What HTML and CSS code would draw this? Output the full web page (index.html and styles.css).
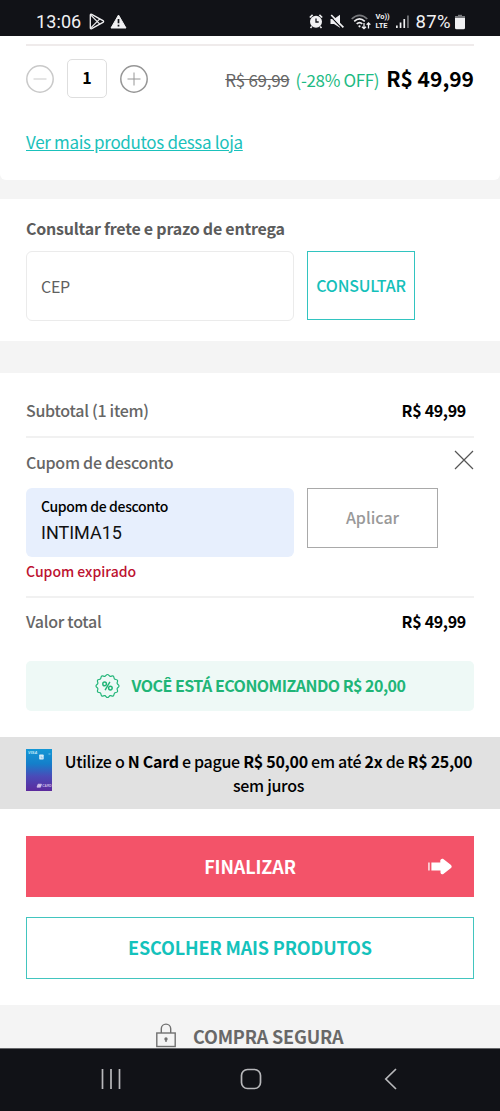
FILE: index.html
```html
<!DOCTYPE html>
<html lang="pt-BR">
<head>
<meta charset="utf-8">
<meta name="viewport" content="width=device-width, initial-scale=1">
<title>Carrinho</title>
<link rel="stylesheet" href="styles.css">
</head>
<body>
<div class="screen">
  <header class="status">
    <span class="clock">13:06</span>
    <svg class="st-play" width="16" height="17" viewBox="0 0 16 17" fill="none" stroke="#f1f1f3" stroke-width="1.300" stroke-linejoin="round"><path d="M1.300 2.200Q1.300.8 2.700 1.400L14 7.600Q15.300 8.500 14 9.400L2.700 15.600Q1.300 16.200 1.300 14.800Z"/><path d="M1.600 1.800 10.800 11.100M1.600 15.200 10.800 5.900" stroke-width="1.200"/></svg>
    <svg class="st-warn" width="17" height="15" viewBox="0 0 17 15"><path d="M8.500 1 16 14H1Z" fill="#f1f1f3" stroke="#f1f1f3" stroke-linejoin="round"/><path d="M8.500 5v4.300M8.500 10.700v1.800" stroke="#111217" stroke-width="1.700"/></svg>
    <span class="grow"></span>
    <svg class="st-alarm" width="14" height="15" viewBox="0 0 14 15"><circle cx="7" cy="7.800" r="6" fill="#f1f1f3"/><path d="M.8 3.500 3.600.9M13.200 3.500 10.400.9M2.800 12.500 1.500 14M11.200 12.500 12.500 14" stroke="#f1f1f3" stroke-width="1.600"/><path d="M7 4.600V8h2.700" fill="none" stroke="#111217" stroke-width="1.300"/></svg>
    <svg class="st-mute" width="14" height="15" viewBox="0 0 14 15"><path d="M.5 5H4L10 .8v12.900L4 9.900H.5Z" fill="#f1f1f3"/><path d="M.5 2.400 12.200 14.500" stroke="#111217" stroke-width="1.200"/><path d="M1.200 1 13.400 13.400" stroke="#f1f1f3" stroke-width="1.700"/></svg>
    <svg class="st-wifi" width="20" height="16" viewBox="0 0 20 16" fill="none" stroke="#f1f1f3" stroke-width="1.700"><path d="M.7 5Q8.500-2.200 16.300 5" stroke="#77787c"/><path d="M3.200 7.300Q8.500 2.600 13.800 7.300M5.700 9.800Q8.500 7.300 11.300 9.800"/><circle cx="8.500" cy="12.300" r="1.100" fill="#f1f1f3" stroke="none"/><path d="M13 9v5.500M11 12.700l2 2 2-2M17.500 14.500V9M15.700 10.800l1.800-1.900 1.800 1.900" stroke-width="1.300"/></svg>
    <span class="volte"><b>Vo))</b><b>LTE</b></span>
    <svg class="st-signal" width="13" height="14" viewBox="0 0 13 14" fill="#f1f1f3"><path d="M0 10.500h1.700V13H0zM3.700 7.500h1.700V13H3.700zM7.400 4h1.700v9H7.400z"/><path d="M11.100.5h1.700V13h-1.700z" fill="#77787c"/></svg>
    <span class="battery-text">87%</span>
    <svg class="st-battery" width="10" height="16" viewBox="0 0 10 16"><rect x="3" y=".8" width="4" height="3" fill="#77787c"/><rect x="0" y="2" width="10" height="13.300" rx="1.500" fill="#f1f1f3"/><path d="M0 4V3.500Q0 2 1.500 2h7Q10 2 10 3.500V4Z" fill="#77787c"/></svg>
  </header>

  <section class="item">
    <div class="rule"></div>
    <div class="item-row">
      <svg width="28" height="28" viewBox="0 0 28 28" fill="none" stroke="#c9c9c9"><circle cx="14" cy="14" r="13.200" stroke-width="1.500"/><path d="M7.500 14h13"/></svg>
      <span class="qty">1</span>
      <svg width="28" height="28" viewBox="0 0 28 28" fill="none" stroke="#969696"><circle cx="14" cy="14" r="13.200" stroke-width="1.500"/><path d="M7.500 14h13M14 7.500v13"/></svg>
      <span class="grow"></span>
      <s class="old-price">R$ 69,99</s>
      <span class="off">(-28% OFF)</span>
      <strong class="price">R$ 49,99</strong>
    </div>
    <a class="store-link">Ver mais produtos dessa loja</a>
  </section>

  <section class="shipping">
    <h2 class="ship-title">Consultar frete e prazo de entrega</h2>
    <div class="field-row">
      <div class="field cep">CEP</div>
      <button class="btn-consult">CONSULTAR</button>
    </div>
  </section>

  <main class="summary">
    <div class="line first"><span class="line-label">Subtotal (1 item)</span><b class="amount">R$ 49,99</b></div>
    <div class="rule light"></div>
    <div class="line coupon-head"><span class="line-label">Cupom de desconto</span>
      <svg width="20" height="20" viewBox="0 0 20 20" stroke="#555" stroke-width="1.200"><path d="M1 1 19 19M19 1 1 19"/></svg>
    </div>
    <div class="field-row">
      <div class="field coupon"><span class="coupon-label">Cupom de desconto</span><span class="coupon-code">INTIMA15</span></div>
      <button class="btn-apply">Aplicar</button>
    </div>
    <p class="error">Cupom expirado</p>
    <div class="rule light"></div>
    <div class="line total"><span class="line-label">Valor total</span><b class="amount">R$ 49,99</b></div>
    <div class="saving">
      <svg width="25" height="26" viewBox="-13 -13 26 26" fill="none" stroke="#20b577" stroke-width="1.200" stroke-linejoin="round"><path d="M0-12C1.200-12 1.700-10.300 2.700-10S5-11 6-10.400 6.500-8 7.300-7.300 9.800-7 10.400-6 9.700-3.700 10-2.700 12-1.200 12 0 10.300 1.700 10 2.700 11 5 10.400 6 8 6.500 7.300 7.300 7 9.800 6 10.400 3.700 9.700 2.700 10 1.200 12 0 12-1.700 10.300-2.700 10-5 11-6 10.400-6.500 8-7.300 7.300-9.800 7-10.400 6-9.700 3.700-10 2.700-12 1.200-12 0-10.300-1.700-10-2.700-11-5-10.400-6-8-6.500-7.300-7.300-7-9.800-6-10.400-3.700-9.700-2.700-10-1.200-12 0-12Z"/><g stroke-width="1.500"><circle cx="-3" cy="-2.200" r="1.900"/><circle cx="3" cy="2.200" r="1.900"/><path d="M2.500-4.200-2.500 4.200"/></g></svg>
      <span class="saving-text">VOCÊ ESTÁ ECONOMIZANDO R$ 20,00</span>
    </div>
    <div class="ncard">
      <svg width="26" height="42" viewBox="0 0 26 42"><defs><linearGradient id="card" x1="0" y1="0" x2="0" y2="1"><stop offset="0" stop-color="#1497d5"/><stop offset=".35" stop-color="#147fca"/><stop offset=".65" stop-color="#4a4bb8"/><stop offset="1" stop-color="#5c2a9d"/></linearGradient></defs><rect width="26" height="42" fill="url(#card)"/><text x="2" y="5" class="visa">VISA</text><rect x="13.200" y="5.500" width="4.500" height="5" rx=".7" fill="#d6ecf8"/><path d="M14.500 8h1.500v1.500" stroke="#5fa8da" stroke-width=".6" fill="none"/><path d="M22.500 5h2" stroke="#7cc8ec"/><path d="M12 35.200h3.500l-1 3h-3.500zM13 36.300h1.500" fill="#c9b5e4" stroke="#e2d6f1" stroke-width=".6"/><text x="16.300" y="38.200" class="card-word">CARD</text></svg>
      <p class="ncard-text">Utilize o <b>N Card</b> e pague <b>R$ 50,00</b> em até <b>2x</b> de <b>R$ 25,00</b><br>sem juros</p>
    </div>
    <div class="actions">
      <button class="btn-finish"><span>FINALIZAR</span>
        <svg class="hand" width="24" height="17" viewBox="0 0 24 17" fill="#fff"><path d="M.3 4.500h1.300v8H.3zM3.400 4.500h8.900V2.200Q13 .2 15 .8L22.700 6.700Q24.700 8.500 22.700 10.300L15 16.200Q13 16.800 12.500 14.800V12.500H3.400Z"/></svg>
      </button>
      <button class="btn-more">ESCOLHER MAIS PRODUTOS</button>
    </div>
  </main>

  <footer class="secure">
    <svg width="20" height="25" viewBox="0 0 20 25" fill="none" stroke="#707070" stroke-width="1.400"><rect x=".8" y="10" width="18.400" height="13.500"/><path d="M5.300 10V5.800a4.700 4.700 0 0 1 9.400 0V10"/><circle cx="10" cy="16" r="1" fill="#707070"/><path d="M10 16v3"/></svg>
    <span class="secure-text">COMPRA SEGURA</span>
  </footer>

  <nav class="nav">
    <svg width="22" height="22" viewBox="0 0 22 22" stroke="#b8b8bb" stroke-width="1.700"><path d="M2.500 1v20M11 1v20M19.500 1v20"/></svg>
    <svg width="22" height="22" viewBox="0 0 22 22" fill="none" stroke="#b8b8bb" stroke-width="1.700"><rect x="1.500" y="1.500" width="19" height="19" rx="6"/></svg>
    <svg width="22" height="22" viewBox="0 0 22 22" fill="none" stroke="#b8b8bb" stroke-width="1.700"><path d="M17 1 6.800 11 17 21"/></svg>
  </nav>
</div>
</body>
</html>
```
FILE: styles.css
```css
* { box-sizing: border-box; }
body { margin: 0; background: #f4f4f4; font-family: "Noto Sans CJK SC", "Noto Sans", sans-serif; color: #000; }
svg { display: block; flex: none; overflow: visible; }
button { font-family: inherit; margin: 0; padding: 0 0 2px; background: #fff; border-radius: 0; flex: none; }
h2, p { margin: 0; }
.screen { width: 500px; height: 1111px; display: flex; flex-direction: column; overflow: hidden; }
.screen span, .screen b, .screen s, .screen strong, .screen a { white-space: nowrap; }
.grow { flex: 1; }

.status { height: 36px; flex: none; padding: 7px 35px 0 36px; background: #111217; color: #f1f1f3; display: flex; align-items: center; font-family: Roboto, sans-serif; }
.clock { font-size: 18px; line-height: 28px; letter-spacing: 0.1px; }
.st-play { margin-left: 8px; }
.st-warn { margin-left: 5px; }
.st-mute { margin-left: 7px; }
.st-wifi { margin-left: 7px; }
.volte { margin-left: 4px; width: 15px; display: flex; flex-direction: column; font-size: 7.5px; line-height: 9px; margin-top: -2px; }
.volte b { height: 9px; }
.st-signal { margin-left: 6px; }
.battery-text { margin-left: 6px; font-size: 18.5px; line-height: 28px; letter-spacing: 0.4px; }
.st-battery { margin-left: 4px; }

.rule { height: 2px; background: #efebeb; }
.rule.light { background: #f1f1f1; }

.item { height: 144px; flex: none; background: #fff; border-radius: 0 0 6px 6px; padding: 8px 26px 0; }
.item-row { height: 66px; display: flex; align-items: center; }
.item-row > svg { margin-top: -1px; }
.qty { width: 40px; height: 39px; margin: -1px 13px 0; border: 1px solid #dedede; border-radius: 5px; font-size: 16px; line-height: 35px; font-weight: 700; text-align: center; }
.old-price { font-size: 17px; letter-spacing: -0.28px; color: #666; }
.off { margin-left: 6px; font-size: 17px; letter-spacing: -0.35px; color: #1dba83; }
.price { margin-left: 7px; font-size: 21px; line-height: 28px; margin-top: -3px; }
.store-link { display: block; margin-top: 16px; font-size: 17px; line-height: 28px; letter-spacing: -0.33px; color: #1ac1bb; text-decoration: underline; }

.shipping { height: 142px; flex: none; margin-top: 19px; background: #fff; padding: 17px 26px 0; }
.ship-title { font-size: 16px; line-height: 24px; letter-spacing: -0.23px; color: #5c5c5c; margin-bottom: 11px; }
.field-row { display: flex; align-items: flex-start; gap: 13px; }
.field { width: 268px; height: 70px; border-radius: 6px; padding-left: 15px; }
.cep { border: 1px solid #ebebeb; padding-left: 14px; font-size: 16px; line-height: 68px; letter-spacing: -0.3px; color: #606060; }
.btn-consult { width: 108px; height: 69px; border: 1px solid #32c4c0; color: #14c0ba; font-size: 16px; letter-spacing: -0.2px; font-weight: 500; }

.summary { height: 632px; flex: none; margin-top: 32px; background: #fff; }
.summary > .rule, .summary > .field-row { margin-left: 26px; margin-right: 26px; }
.line { display: flex; justify-content: space-between; align-items: center; padding: 0 34px 0 26px; font-size: 16px; line-height: 24px; }
.line-label { color: #666; font-weight: 500; letter-spacing: -0.27px; }
.first { padding-top: 25px; padding-bottom: 14px; }
.amount { font-size: 16px; letter-spacing: -0.32px; }
.coupon-head { height: 50px; padding-right: 26px; padding-bottom: 2px; }
.coupon-head svg { margin-top: -5px; }
.coupon { background: #e7effd; display: flex; flex-direction: column; padding-top: 8px; height: 69px; }
.coupon-label { font-size: 14px; line-height: 20px; letter-spacing: -0.35px; font-weight: 500; }
.coupon-code { font: 18px/34px Roboto, sans-serif; color: #111; }
.btn-apply { width: 131px; height: 60px; border: 1px solid #a9a9a9; color: #999; font-size: 16px; font-weight: 500; }
.error { padding-left: 26px; margin: 4px 0 15px; font-size: 14px; line-height: 20px; font-weight: 500; color: #bd1230; }
.total { padding-top: 11px; }
.saving { height: 50px; margin: 28px 26px 26px; border-radius: 5px; background: #eef9f6; display: flex; align-items: center; justify-content: center; gap: 12px; }
.saving-text { font-size: 16px; font-weight: 700; letter-spacing: -0.53px; color: #20b577; margin-top: -2px; }
.ncard { height: 72px; background: #e1e1e1; display: flex; padding: 12px 26px; gap: 12px; }
.ncard-text { width: 409px; font-size: 16px; line-height: 24px; letter-spacing: -0.29px; font-weight: 500; text-align: center; white-space: nowrap; }
.visa { font: italic bold 4px "Liberation Sans", sans-serif; fill: #c3e8f8; }
.card-word { font: bold 3.2px "Liberation Sans", sans-serif; fill: #cbb9e5; }
.actions { padding: 27px 26px 0; display: flex; flex-direction: column; gap: 20px; }
.btn-finish { position: relative; height: 61px; border: 0; background: #f35369; color: #fff; font-size: 18px; font-weight: 700; letter-spacing: -0.1px; }
.hand { position: absolute; right: 22px; top: 22px; }
.btn-more { height: 62px; border: 1px solid #42c5bf; color: #14c2bc; font-size: 18px; font-weight: 700; letter-spacing: -0.15px; }

.secure { height: 43px; flex: none; padding: 18px 0 0 156px; display: flex; align-items: flex-start; gap: 17px; background: #f4f4f4; overflow: hidden; }
.secure-text { font-size: 18px; line-height: 26px; font-weight: 700; letter-spacing: -0.15px; color: #686868; }
.nav { height: 63px; flex: none; background: #111217; border-top: 1px solid #66676a; display: flex; justify-content: space-between; padding: 19px 99px 0 100px; }
```
